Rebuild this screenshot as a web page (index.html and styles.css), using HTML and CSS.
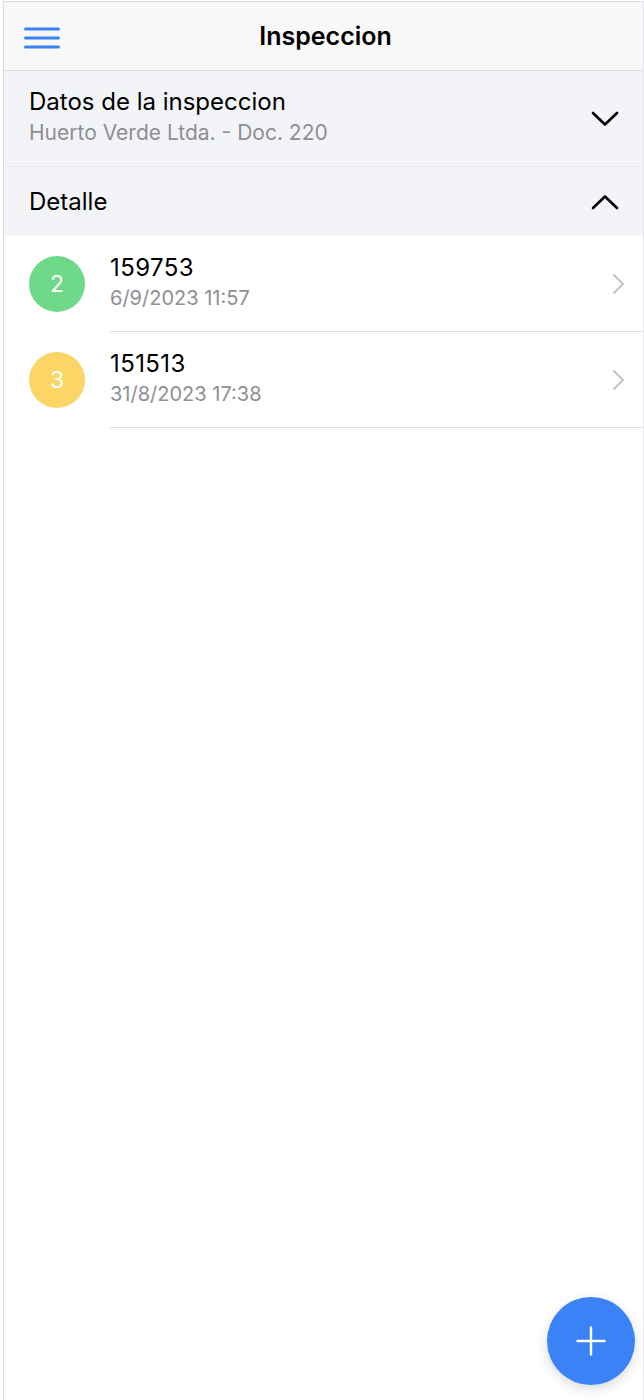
FILE: index.html
```html
<!DOCTYPE html>
<html lang="es">
  <head>
    <meta charset="UTF-8" />
    <meta name="viewport" content="width=device-width, initial-scale=1.0" />
    <title>Inspeccion</title>
    <link rel="stylesheet" href="styles.css">
  </head>
  <body>
    <div class="frame">
      <header class="toolbar">
        <button class="menu-btn" aria-label="Menu">
          <svg width="36" height="22" viewBox="0 0 36 22">
            <g stroke="#3b82f6" stroke-width="3" stroke-linecap="round">
              <line x1="1.5" y1="2" x2="34.5" y2="2" />
              <line x1="1.5" y1="11" x2="34.5" y2="11" />
              <line x1="1.5" y1="20" x2="34.5" y2="20" />
            </g>
          </svg>
        </button>
        <h1>Inspeccion</h1>
      </header>

      <div class="section section-datos">
        <div class="section-text">
          <div class="section-title">Datos de la inspeccion</div>
          <div class="section-sub">Huerto Verde Ltda. - Doc. 220</div>
        </div>
        <svg class="chev" width="28" height="16" viewBox="0 0 28 16">
          <polyline points="2,2 14,13.5 26,2" fill="none" stroke="#000" stroke-width="2.6" stroke-linecap="round" stroke-linejoin="round" />
        </svg>
      </div>

      <div class="section section-detalle">
        <div class="section-title">Detalle</div>
        <svg class="chev" width="28" height="16" viewBox="0 0 28 16">
          <polyline points="2,14 14,2.5 26,14" fill="none" stroke="#000" stroke-width="2.6" stroke-linecap="round" stroke-linejoin="round" />
        </svg>
      </div>

      <ul class="list">
        <li class="item">
          <div class="badge green">2</div>
          <div class="item-body">
            <div class="item-text">
              <div class="item-title">159753</div>
              <div class="item-date">6/9/2023 11:57</div>
            </div>
            <svg class="arrow" width="14" height="22" viewBox="0 0 14 22">
              <polyline points="2,2 11,11 2,20" fill="none" stroke="#c4c4c8" stroke-width="2" stroke-linecap="round" stroke-linejoin="round" />
            </svg>
          </div>
        </li>
        <li class="item">
          <div class="badge yellow">3</div>
          <div class="item-body">
            <div class="item-text">
              <div class="item-title">151513</div>
              <div class="item-date">31/8/2023 17:38</div>
            </div>
            <svg class="arrow" width="14" height="22" viewBox="0 0 14 22">
              <polyline points="2,2 11,11 2,20" fill="none" stroke="#c4c4c8" stroke-width="2" stroke-linecap="round" stroke-linejoin="round" />
            </svg>
          </div>
        </li>
      </ul>

      <button class="fab" aria-label="Agregar">
        <svg width="30" height="30" viewBox="0 0 30 30">
          <g stroke="#fff" stroke-width="2.4" stroke-linecap="round">
            <line x1="15" y1="1.5" x2="15" y2="28.5" />
            <line x1="1.5" y1="15" x2="28.5" y2="15" />
          </g>
        </svg>
      </button>
    </div>
  </body>
</html>
```

FILE: styles.css
```css
* {
  margin: 0;
  padding: 0;
  box-sizing: border-box;
}

body {
  font-family: "Inter", "Liberation Sans", Arial, sans-serif;
  background: #fff;
  color: #000;
  height: 1400px;
  overflow: hidden;
}

.frame {
  position: relative;
  margin-left: 3px;
  margin-top: 1px;
  height: 1399px;
  border-left: 1px solid #d9dce4;
  border-top: 1px solid #d9dce4;
  border-right: 1px solid #e4e6ec;
  background: #fff;
}

.toolbar {
  position: relative;
  height: 69px;
  display: flex;
  align-items: center;
  justify-content: center;
  background: #f8f8f8;
  border-bottom: 1px solid #dcdde1;
}

.menu-btn {
  position: absolute;
  left: 20px;
  top: 25px;
  background: none;
  border: none;
  display: flex;
}

.toolbar h1 {
  font-size: 25px;
  font-weight: 600;
  margin-left: 4px;
}

.section {
  display: flex;
  align-items: center;
  justify-content: space-between;
  background: #f3f4f8;
  padding: 0 24px 0 25px;
}

.section-datos {
  height: 96px;
  border-bottom: 1px solid #e8e9ee;
}

.section-detalle {
  height: 69px;
}

.section-text {
  display: flex;
  flex-direction: column;
  gap: 4px;
  margin-top: -6px;
}

.section-title {
  font-size: 24px;
}

.section-sub {
  font-size: 21px;
  color: #8e8e93;
}

.list {
  list-style: none;
}

.item {
  display: flex;
  align-items: stretch;
  height: 96px;
}

.badge {
  flex: none;
  width: 56px;
  height: 56px;
  border-radius: 50%;
  margin: 20px 25px 0 25px;
  display: flex;
  align-items: center;
  justify-content: center;
  color: #fff;
  font-size: 23px;
}

.badge.green {
  background: #6fd98a;
}

.badge.yellow {
  background: #fbd566;
}

.item-body {
  flex: 1;
  display: flex;
  align-items: center;
  justify-content: space-between;
  border-bottom: 1px solid #dedfe3;
  padding-right: 17px;
}

.item-text {
  display: flex;
  flex-direction: column;
  gap: 4px;
  margin-top: -5px;
}

.item-title {
  font-size: 24px;
  letter-spacing: 0.4px;
}

.item-date {
  font-size: 20px;
  color: #8e8e93;
}

.fab {
  position: absolute;
  right: 8px;
  top: 1295px;
  width: 88px;
  height: 88px;
  border-radius: 50%;
  border: none;
  background: #3b82f6;
  display: flex;
  align-items: center;
  justify-content: center;
  box-shadow: 0 4px 12px rgba(0, 0, 0, 0.15);
}
```
